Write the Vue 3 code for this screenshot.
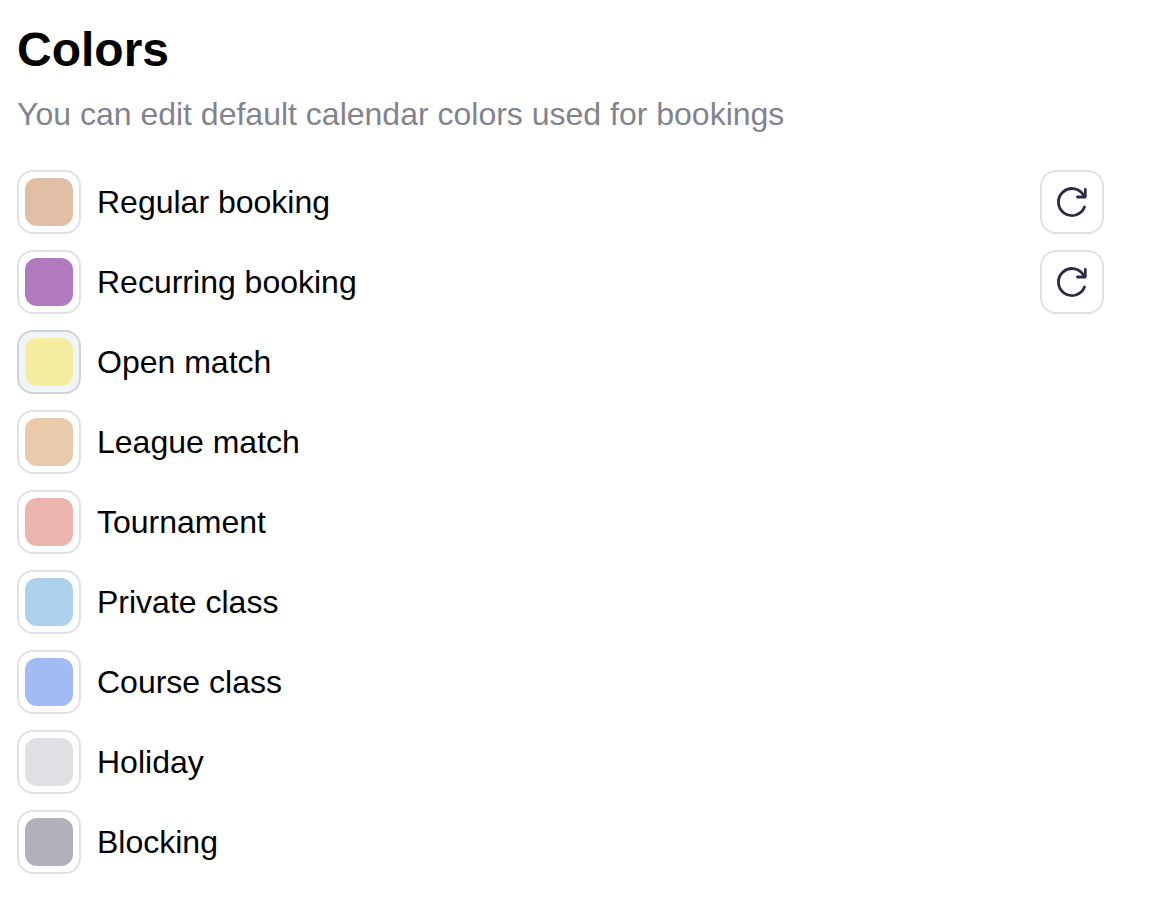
<script setup>
const items = [
  { name: 'Regular booking', color: '#e1bfa6', reset: true },
  { name: 'Recurring booking', color: '#b27abe', reset: true },
  { name: 'Open match', color: '#f4eda0', active: true },
  { name: 'League match', color: '#e9caab' },
  { name: 'Tournament', color: '#ebb5ad' },
  { name: 'Private class', color: '#add1ed' },
  { name: 'Course class', color: '#a3bbf5' },
  { name: 'Holiday', color: '#dee0e4' },
  { name: 'Blocking', color: '#b1b1bb' },
]
</script>

<template>
  <main class="panel">
    <h1>Colors</h1>
    <p class="intro">You can edit default calendar colors used for bookings</p>
    <ul class="list">
      <li v-for="(item, i) in items" :key="item.name" class="row">
        <button :id="`color-${i}`" type="button" class="tile" :class="{ active: item.active }">
          <span class="swatch" :style="{ background: item.color }"></span>
        </button>
        <label class="name" :for="`color-${i}`">{{ item.name }}</label>
        <button v-if="item.reset" type="button" class="tile reset" :aria-label="`Reset ${item.name}`">
          <svg width="32" height="32" viewBox="0 0 32 32" fill="none" stroke="#2b2b45" stroke-width="2.8" stroke-linecap="round" stroke-linejoin="round" aria-hidden="true">
            <path d="M28.5 21A13.5 13.5 0 1 1 28 10" />
            <path d="M29.3 3.5V11H21.5" />
          </svg>
        </button>
      </li>
    </ul>
  </main>
</template>

<style>
body {
  margin: 0;
  background: #fff;
}
</style>

<style scoped>
.panel {
  padding: 22px 68px 26px 17px;
  font-family: "Liberation Sans", Arial, sans-serif;
  color: #000;
}
h1 {
  margin: 0;
  font-size: 48px;
  line-height: 56px;
  font-weight: 700;
}
.intro {
  margin: 16px 0 36px;
  font-size: 32px;
  line-height: 40px;
  color: #82838f;
}
.list {
  display: grid;
  gap: 16px;
  margin: 0;
  padding: 0;
  list-style: none;
}
.row {
  display: flex;
  align-items: center;
  gap: 16px;
}
.name {
  flex: 1;
  font-size: 32px;
  line-height: 40px;
}
.tile {
  display: flex;
  align-items: center;
  justify-content: center;
  box-sizing: border-box;
  width: 64px;
  height: 64px;
  padding: 0;
  border: 2px solid #e1e1e3;
  border-radius: 16px;
  background: #fff;
}
.tile.active {
  border-color: #d0d2d4;
  background: #f2f5f7;
}
.swatch {
  width: 48px;
  height: 48px;
  border-radius: 12px;
}
</style>
